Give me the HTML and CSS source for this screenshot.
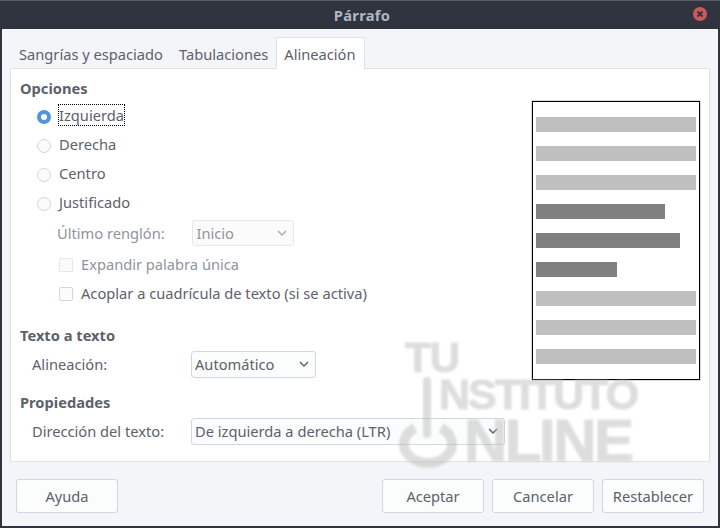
FILE: index.html
```html
<!DOCTYPE html>
<html lang="es">
<head>
<meta charset="utf-8">
<title>Párrafo</title>
<link rel="stylesheet" href="styles.css">
</head>
<body>
<div class="window">
  <header class="titlebar">
    <span class="title">Párrafo</span>
    <span class="close"><svg width="14" height="14" viewBox="0 0 14 14"><circle cx="7" cy="7" r="7" fill="#cc575d"/><path d="M4.500 4.500l5 5M9.500 4.500l-5 5" stroke="#2f343f" stroke-width="1.800" fill="none"/></svg></span>
  </header>
  <div class="content">
    <nav class="tabs">
      <span class="tab">Sangrías y espaciado</span>
      <span class="tab">Tabulaciones</span>
      <span class="tab active">Alineación</span>
    </nav>
    <main class="panel">
      <div class="form">
        <h2 class="heading first">Opciones</h2>
        <div class="radio-row top"><span class="radio checked"></span><span class="text focus">Izquierda</span></div>
        <div class="radio-row"><span class="radio"></span><span class="text">Derecha</span></div>
        <div class="radio-row"><span class="radio"></span><span class="text">Centro</span></div>
        <div class="radio-row"><span class="radio"></span><span class="text">Justificado</span></div>
        <div class="field last-line">
          <span class="label muted">Último renglón:</span>
          <span class="select disabled small">Inicio<svg class="chev" width="12" height="8" viewBox="0 0 12 8"><path d="M2 2L6 6l4-4" stroke="#a9adb4" stroke-width="1.500" fill="none"/></svg></span>
        </div>
        <div class="check-row"><span class="check disabled"></span><span class="muted">Expandir palabra única</span></div>
        <div class="check-row"><span class="check"></span><span>Acoplar a cuadrícula de texto (si se activa)</span></div>
        <h2 class="heading second">Texto a texto</h2>
        <div class="field">
          <span class="label wide">Alineación:</span>
          <span class="select medium">Automático<svg class="chev" width="12" height="8" viewBox="0 0 12 8"><path d="M2 2L6 6l4-4" stroke="#5c616c" stroke-width="1.500" fill="none"/></svg></span>
        </div>
        <h2 class="heading third">Propiedades</h2>
        <div class="field">
          <span class="label wide">Dirección del texto:</span>
          <span class="select large">De izquierda a derecha (LTR)<svg class="chev" width="12" height="8" viewBox="0 0 12 8"><path d="M2 2L6 6l4-4" stroke="#5c616c" stroke-width="1.500" fill="none"/></svg></span>
        </div>
      </div>
      <aside class="preview">
        <div class="bar"></div>
        <div class="bar"></div>
        <div class="bar"></div>
        <div class="bar dark" style="width:129px"></div>
        <div class="bar dark" style="width:144px"></div>
        <div class="bar dark" style="width:81px"></div>
        <div class="bar"></div>
        <div class="bar"></div>
        <div class="bar"></div>
      </aside>
    </main>
    <footer class="actions">
      <button class="btn" type="button">Ayuda</button>
      <span class="spacer"></span>
      <button class="btn" type="button">Aceptar</button>
      <button class="btn" type="button">Cancelar</button>
      <button class="btn" type="button">Restablecer</button>
    </footer>
  </div>
  <div class="watermark">
    <span class="wm-tu">TU</span>
    <span class="wm-inst">NSTITUTO</span>
    <span class="wm-on">NLINE</span>
    <svg class="wm-power" width="60" height="100" viewBox="0 0 60 100"><path d="M29 9V62" stroke="#bdbdbd" stroke-width="8" stroke-linecap="round" fill="none"/><path d="M17 56A24 19 0 1 0 43 56" stroke="#bdbdbd" stroke-width="10" fill="none"/></svg>
  </div>
</div>
</body>
</html>
```
FILE: styles.css
```css
* { box-sizing: border-box; }
html, body { margin: 0; padding: 0; }
body {
  width: 720px;
  height: 528px;
  overflow: hidden;
  font-family: "Noto Sans", sans-serif;
  font-size: 14.67px;
  color: #5c616c;
}
.window {
  position: relative;
  width: 720px;
  height: 528px;
  display: flex;
  flex-direction: column;
  background: #2f343f;
  border-top: 1px solid #5a5f69;
  padding: 0 2px 2px;
}
.titlebar {
  height: 28px;
  flex: none;
  position: relative;
  display: flex;
  align-items: center;
  justify-content: center;
}
.title {
  font-weight: 700;
  font-size: 14.67px;
  letter-spacing: 0.3px;
  padding-left: 4px;
  color: #afb8c5;
}
.close {
  position: absolute;
  right: 11px;
  top: 6px;
  width: 14px;
  height: 14px;
  display: block;
  line-height: 0;
}
.content {
  flex: 1;
  background: #f4f5f8;
  padding: 8px 8px 0;
  display: flex;
  flex-direction: column;
}
.tabs {
  display: flex;
  height: 32px;
  flex: none;
  margin-bottom: -1px;
  padding-left: 1px;
  position: relative;
  z-index: 1;
}
.tab {
  padding: 0 8px;
  line-height: 35px;
  height: 32px;
}
.tab.active {
  background: #fff;
  border: 1px solid #dde3e9;
  border-bottom: 0;
  line-height: 32px;
  padding: 0 8px 0 7px;
}
.panel {
  height: 394px;
  flex: none;
  background: #fff;
  border: 1px solid #dde3e9;
  display: flex;
  justify-content: space-between;
  padding: 0 9px;
}
.form { display: flex; flex-direction: column; padding-top: 8px; }
.heading {
  margin: 0;
  height: 22px;
  line-height: 22px;
  font-size: 14.67px;
  font-weight: 700;
}
.second { margin-top: 16px; }
.third { margin-top: 13px; }
.radio-row {
  height: 29px;
  display: flex;
  align-items: center;
  padding-left: 17px;
  gap: 8px;
}
.radio-row.top { margin-top: 3px; }
.text { margin-bottom: 3px; }
.radio {
  width: 14px;
  height: 14px;
  border-radius: 50%;
  background: #fbfbfc;
  border: 1px solid #cfd6e6;
  flex: none;
}
.radio.checked {
  border: 4.500px solid #5294e2;
  background: #fff;
}
.focus {
  outline: 1px dotted #000;
  line-height: 20px;
}
.field {
  display: flex;
  align-items: center;
  margin-top: 5px;
}
.last-line { margin-top: 2px; }
.label { padding: 0 0 1px 12px; }
.label.wide { width: 171px; }
.last-line .label { padding: 0 0 0 37px; width: 172px; }
.muted { color: #8f939b; }
.select {
  height: 27px;
  background: #fbfcfc;
  border: 1px solid #cfd6e6;
  border-radius: 3px;
  display: flex;
  align-items: center;
  justify-content: space-between;
  padding: 0 5px 1px 3px;
}
.select.small { width: 102px; height: 26px; padding: 0 5px 0 3.500px; }
.select.medium { width: 125px; }
.select.large { width: 314px; }
.select.disabled { color: #8f939b; background: #fbfbfc; border-color: #e4e7ee; }
.chev { flex: none; }
.check-row {
  height: 29px;
  display: flex;
  align-items: center;
  gap: 8px;
  padding: 0 0 1px 39px;
}
.check-row .check { margin-top: 1px; }
.last-line + .check-row { margin-top: 4px; }
.check {
  width: 14px;
  height: 14px;
  background: #fbfbfc;
  border: 1px solid #cfd6e6;
  border-radius: 2px;
  flex: none;
}
.check.disabled { border-color: #e4e7ee; }
.preview {
  width: 168px;
  height: 279px;
  margin-top: 32px;
  flex: none;
  background: #fff;
  border: 1px solid #000;
  box-shadow: 0 0 0 1px #dadada;
  padding: 15px 3px 0;
  display: flex;
  flex-direction: column;
  gap: 14px;
}
.bar { width: 160px; height: 15px; background: #bfbfbf; flex: none; }
.bar.dark { background: #808080; }
.actions {
  display: flex;
  gap: 8px;
  padding: 17px 6px 0;
}
.spacer { flex: 1; }
.btn {
  width: 102px;
  height: 34px;
  background: #fbfcfc;
  border: 1px solid #cfd6e6;
  border-radius: 3px;
  font: inherit;
  color: #5c616c;
  padding: 0;
}
.watermark {
  position: absolute;
  left: 398px;
  top: 335px;
  width: 245px;
  height: 140px;
  pointer-events: none;
  opacity: 0.5;
  filter: blur(1.200px);
  color: #bdbdbd;
  font-family: "Liberation Sans", sans-serif;
  font-weight: 700;
  -webkit-text-stroke: 1px #bdbdbd;
}
.watermark span { position: absolute; line-height: 1; white-space: nowrap; }
.wm-tu { left: 7px; top: 1px; font-size: 42px; letter-spacing: -1px; }
.wm-inst { left: 41px; top: 37px; font-size: 43px; letter-spacing: -2px; }
.wm-on { left: 66px; top: 75px; font-size: 60px; letter-spacing: -2.500px; }
.wm-power { position: absolute; left: 0; top: 36px; }
```
